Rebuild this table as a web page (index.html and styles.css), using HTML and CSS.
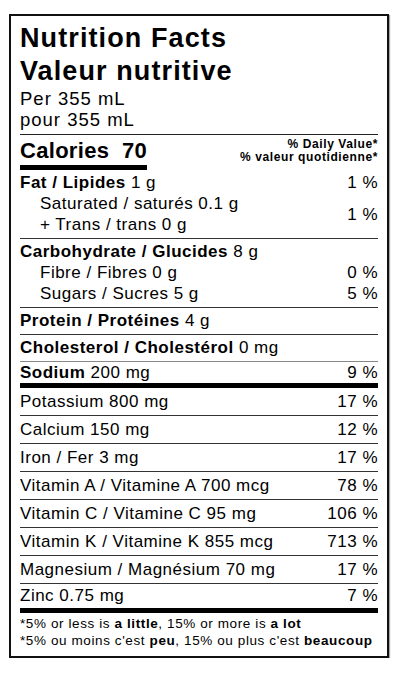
FILE: index.html
```html
<!DOCTYPE html>
<html>
<head>
    <title>Nutrition Facts</title>
    <link rel="stylesheet" href="styles.css">
</head>
<body>
    <!-- Label -->
    <div class="label">
        <h1 class="title">Nutrition Facts<br>Valeur nutritive</h1>
        <div class="serving">Per 355 mL<br>pour 355 mL</div>

        <div class="cal-row">
            <div class="calories">Calories&nbsp; 70</div>
            <div class="dv">
                <div>% Daily Value*</div>
                <div>% valeur quotidienne*</div>
            </div>
        </div>

        <!-- Nutriments principaux -->
        <div class="group">
            <div class="line"><span><b>Fat / Lipides</b> 1 g</span><span>1 %</span></div>
            <div class="line pair">
                <div class="sub">
                    <div>Saturated / saturés 0.1 g</div>
                    <div>+ Trans / trans 0 g</div>
                </div>
                <span>1 %</span>
            </div>
        </div>

        <div class="group">
            <div class="line"><span><b>Carbohydrate / Glucides</b> 8 g</span></div>
            <div class="line sub"><span>Fibre / Fibres 0 g</span><span>0 %</span></div>
            <div class="line sub"><span>Sugars / Sucres 5 g</span><span>5 %</span></div>
        </div>

        <div class="group">
            <div class="line"><span><b>Protein / Protéines</b> 4 g</span></div>
        </div>

        <div class="group light">
            <div class="line"><span><b>Cholesterol / Cholestérol</b> 0 mg</span></div>
        </div>

        <div class="group sodium">
            <div class="line"><span><b>Sodium</b> 200 mg</span><span>9 %</span></div>
        </div>

        <!-- Minéraux et vitamines -->
        <div class="row"><span>Potassium 800 mg</span><span>17 %</span></div>
        <div class="row"><span>Calcium 150 mg</span><span>12 %</span></div>
        <div class="row"><span>Iron / Fer 3 mg</span><span>17 %</span></div>
        <div class="row"><span>Vitamin A / Vitamine A 700 mcg</span><span>78 %</span></div>
        <div class="row"><span>Vitamin C / Vitamine C 95 mg</span><span>106 %</span></div>
        <div class="row"><span>Vitamin K / Vitamine K 855 mcg</span><span>713 %</span></div>
        <div class="row"><span>Magnesium / Magnésium 70 mg</span><span>17 %</span></div>
        <div class="row last"><span>Zinc 0.75 mg</span><span>7 %</span></div>

        <div class="footnote">
            *5% or less is <b>a little</b>, 15% or more is <b>a lot</b><br>
            *5% ou moins c'est <b>peu</b>, 15% ou plus c'est <b>beaucoup</b>
        </div>
    </div>
</body>
</html>
```

FILE: styles.css
```css
/* Styles généraux */
body {
    margin: 0;
    background: #fff;
    color: #000;
    font-family: "Liberation Sans", Arial, sans-serif;
}

.label {
    box-sizing: border-box;
    width: 380px;
    margin: 14px 0 0 9px;
    padding: 6px 9px 7px;
    border: 2px solid #111;
    box-shadow: 1px 1px 1px rgba(0, 0, 0, 0.35);
}

/* En-tête */
.title {
    margin: 0;
    font-size: 27px;
    line-height: 33px;
    font-weight: bold;
    letter-spacing: 1.1px;
}

.serving {
    font-size: 18.5px;
    line-height: 21px;
    letter-spacing: 1px;
    padding-bottom: 4px;
    border-bottom: 1px solid #222;
}

/* Calories */
.cal-row {
    display: flex;
    justify-content: space-between;
    align-items: flex-start;
    padding-top: 2px;
}

.calories {
    font-size: 22px;
    line-height: 28px;
    font-weight: bold;
    letter-spacing: 0.3px;
    border-bottom: 5px solid #000;
}

.dv {
    padding-top: 1px;
    font-size: 12px;
    line-height: 12.5px;
    font-weight: bold;
    letter-spacing: 0.6px;
    text-align: right;
}

/* Groupes */
.group {
    padding: 2px 0 3px;
    border-bottom: 1px solid #333;
    font-size: 17px;
    letter-spacing: 0.5px;
}

.group.light {
    border-bottom-color: #888;
}

.group.sodium {
    padding: 1px 0 0;
    border-bottom: 5px solid #000;
}

.group.sodium .line {
    line-height: 20px;
}

.line {
    display: flex;
    justify-content: space-between;
    line-height: 21px;
}

.line.sub,
.line.pair .sub {
    padding-left: 20px;
}

.line.pair {
    align-items: center;
}

/* Lignes simples */
.row {
    display: flex;
    justify-content: space-between;
    font-size: 17px;
    line-height: 27px;
    letter-spacing: 0.5px;
    border-bottom: 1px solid #333;
}

.row.last {
    line-height: 24px;
    border-bottom: 5px solid #000;
}

/* Note */
.footnote {
    padding-top: 2px;
    font-size: 13.5px;
    line-height: 17px;
    letter-spacing: 0.6px;
}
```
